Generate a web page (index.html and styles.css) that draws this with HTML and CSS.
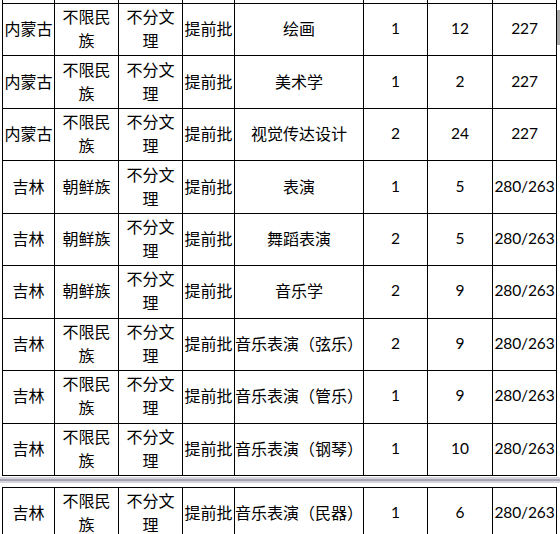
FILE: index.html
```html
<!DOCTYPE html>
<html lang="zh-CN">
<head>
<meta charset="utf-8">
<title>招生计划</title>
<link rel="stylesheet" href="styles.css">
</head>
<body>
<div class="page">
  <div class="sheet">
    <table class="grid">
      <colgroup>
        <col class="c1"><col class="c2"><col class="c3"><col class="c4"><col class="c5"><col class="c6"><col class="c7"><col class="c8">
      </colgroup>
      <tbody>
        <tr class="stub"><td></td><td></td><td></td><td></td><td></td><td></td><td></td><td></td></tr>
        <tr><td>内蒙古</td><td>不限民族</td><td>不分文理</td><td>提前批</td><td>绘画</td><td class="n">1</td><td class="n">12</td><td class="n">227</td></tr>
        <tr><td>内蒙古</td><td>不限民族</td><td>不分文理</td><td>提前批</td><td>美术学</td><td class="n">1</td><td class="n">2</td><td class="n">227</td></tr>
        <tr><td>内蒙古</td><td>不限民族</td><td>不分文理</td><td>提前批</td><td>视觉传达设计</td><td class="n">2</td><td class="n">24</td><td class="n">227</td></tr>
        <tr><td>吉林</td><td>朝鲜族</td><td>不分文理</td><td>提前批</td><td>表演</td><td class="n">1</td><td class="n">5</td><td class="n">280/263</td></tr>
        <tr><td>吉林</td><td>朝鲜族</td><td>不分文理</td><td>提前批</td><td>舞蹈表演</td><td class="n">2</td><td class="n">5</td><td class="n">280/263</td></tr>
        <tr><td>吉林</td><td>朝鲜族</td><td>不分文理</td><td>提前批</td><td>音乐学</td><td class="n">2</td><td class="n">9</td><td class="n">280/263</td></tr>
        <tr><td>吉林</td><td>不限民族</td><td>不分文理</td><td>提前批</td><td>音乐表演（弦乐）</td><td class="n">2</td><td class="n">9</td><td class="n">280/263</td></tr>
        <tr><td>吉林</td><td>不限民族</td><td>不分文理</td><td>提前批</td><td>音乐表演（管乐）</td><td class="n">1</td><td class="n">9</td><td class="n">280/263</td></tr>
        <tr><td>吉林</td><td>不限民族</td><td>不分文理</td><td>提前批</td><td>音乐表演（钢琴）</td><td class="n">1</td><td class="n">10</td><td class="n">280/263</td></tr>
      </tbody>
    </table>
    <div class="side"><div class="side-bar"></div></div>
  </div>
  <div class="pagebreak"></div>
  <div class="sheet">
    <table class="grid grid-next">
      <colgroup>
        <col class="c1"><col class="c2"><col class="c3"><col class="c4"><col class="c5"><col class="c6"><col class="c7"><col class="c8">
      </colgroup>
      <tbody>
        <tr><td>吉林</td><td>不限民族</td><td>不分文理</td><td>提前批</td><td>音乐表演（民器）</td><td class="n">1</td><td class="n">6</td><td class="n">280/263</td></tr>
      </tbody>
    </table>
  </div>
</div>
</body>
</html>
```

FILE: styles.css
```css
html, body {
  margin: 0;
  padding: 0;
  overflow: hidden;
  background: #ffffff;
}

.page {
  width: 560px;
  height: 534px;
  overflow: hidden;
  font-family: "Noto Sans CJK SC", "Noto Sans", sans-serif;
  font-size: 16px;
  color: #000000;
}

.sheet {
  display: flex;
  align-items: flex-start;
}

.grid {
  margin-left: 2px;
  table-layout: fixed;
  border-collapse: separate;
  border-spacing: 0;
  border-left: 1px solid #000;
  width: 555px;
  flex: none;
}

.grid-next {
  border-top: 1px solid #000;
}

.c1 { width: 52px; }
.c2 { width: 64px; }
.c3 { width: 64px; }
.c4 { width: 52px; }
.c5 { width: 129px; }
.c6 { width: 64px; }
.c7 { width: 65px; }
.c8 { width: 64px; }

.grid tr {
  height: 52.44px;
}

.grid tr.stub {
  height: 4px;
}

.grid td {
  padding: 0 0 3px 0;
  border-right: 1px solid #000;
  border-bottom: 1px solid #000;
  text-align: center;
  vertical-align: middle;
  line-height: 24px;
  white-space: normal;
  word-break: break-all;
  overflow: hidden;
}

.grid tr.stub td {
  padding: 0;
  line-height: 0;
  font-size: 0;
}

.grid td.n {
  font-family: Lato, "Noto Sans", sans-serif;
  font-size: 15.5px;
  white-space: nowrap;
  letter-spacing: -0.1px;
}

.side {
  flex: 1;
  display: flex;
  justify-content: flex-end;
  padding-top: 10px;
}

.side-bar {
  width: 3px;
  height: 35px;
  background: #a9a9a9;
}

.pagebreak {
  margin-top: 1px;
  margin-bottom: 4px;
  height: 2px;
  background: #a4a4ae;
  border-top: 2px solid #d4d4dc;
  border-bottom: 2px solid #d4d4dc;
}
```
